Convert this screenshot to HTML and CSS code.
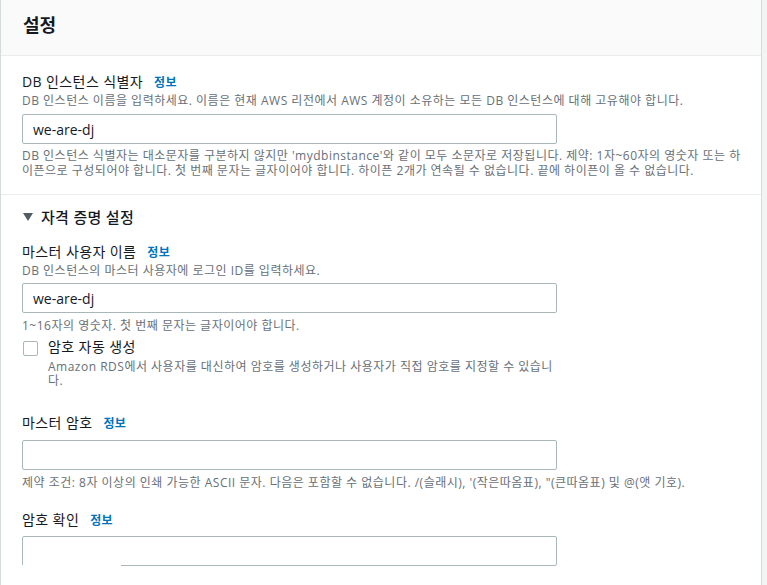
FILE: index.html
```html
<!DOCTYPE html>
<html lang="ko">
<head>
    <meta charset="UTF-8">
    <meta name="viewport" content="width=device-width, initial-scale=1.0">
    <title>설정</title>
    <link rel="stylesheet" href="styles.css">
</head>
<body>
    <div class="panel">
        <div class="panel-header">
            <h2>설정</h2>
        </div>

        <!-- DB instance identifier -->
        <div class="section">
            <div class="field">
                <div class="label">DB 인스턴스 식별자 <a class="info">정보</a></div>
                <div class="desc">DB 인스턴스 이름을 입력하세요. 이름은 현재 AWS 리전에서 AWS 계정이 소유하는 모든 DB 인스턴스에 대해 고유해야 합니다.</div>
                <input class="text-input" type="text" value="we-are-dj">
                <div class="hint hint-wide">DB 인스턴스 식별자는 대소문자를 구분하지 않지만 'mydbinstance'와 같이 모두 소문자로 저장됩니다. 제약: 1자~60자의 영숫자 또는 하이픈으로 구성되어야 합니다. 첫 번째 문자는 글자이어야 합니다. 하이픈 2개가 연속될 수 없습니다. 끝에 하이픈이 올 수 없습니다.</div>
            </div>
        </div>

        <!-- Credentials -->
        <div class="section section-open">
            <div class="expander">
                <svg class="caret" width="10" height="8" viewBox="0 0 10 8"><polygon points="0,0 10,0 5,8" fill="#545b64"/></svg>
                <span>자격 증명 설정</span>
            </div>

            <div class="field">
                <div class="label">마스터 사용자 이름 <a class="info">정보</a></div>
                <div class="desc">DB 인스턴스의 마스터 사용자에 로그인 ID를 입력하세요.</div>
                <input class="text-input" type="text" value="we-are-dj">
                <div class="hint">1~16자의 영숫자. 첫 번째 문자는 글자이어야 합니다.</div>
            </div>

            <label class="check-row">
                <span class="checkbox"></span>
                <span class="check-text">
                    <span class="check-label">암호 자동 생성</span>
                    <span class="check-desc">Amazon RDS에서 사용자를 대신하여 암호를 생성하거나 사용자가 직접 암호를 지정할 수 있습니다.</span>
                </span>
            </label>

            <div class="field field-pw">
                <div class="label">마스터 암호 <a class="info">정보</a></div>
                <input class="text-input" type="password">
                <div class="hint">제약 조건: 8자 이상의 인쇄 가능한 ASCII 문자. 다음은 포함할 수 없습니다. /(슬래시), '(작은따옴표), "(큰따옴표) 및 @(앳 기호).</div>
            </div>

            <div class="field field-pw field-confirm">
                <div class="label">암호 확인 <a class="info">정보</a></div>
                <div class="input-wrap">
                    <input class="text-input" type="password">
                    <span class="mask"></span>
                </div>
            </div>
        </div>
    </div>
</body>
</html>
```

FILE: styles.css
```css
body {
    margin: 0;
    background: #f2f3f3;
    font-family: "Open Sans", "Noto Sans CJK KR", sans-serif;
    color: #16191f;
    overflow: hidden;
}

.panel {
    width: 762px;
    min-height: 700px;
    box-sizing: border-box;
    background: #fff;
    border-left: 1px solid #d5dbdb;
    border-right: 1px solid #d5dbdb;
}

.panel-header {
    background: #fafafa;
    border-bottom: 1px solid #eaeded;
    padding: 14px 22px 19px;
}

.panel-header h2 {
    margin: 0;
    font-size: 18px;
    line-height: 22px;
    font-weight: bold;
}

.section {
    padding: 16px 22px 16px 21px;
    border-bottom: 1px solid #eaeded;
}

.section-open {
    padding-top: 12px;
    border-bottom: none;
}

.label {
    font-size: 14px;
    line-height: 20px;
    letter-spacing: 0.4px;
}

.info {
    margin-left: 7px;
    font-size: 12px;
    font-weight: bold;
    letter-spacing: 0.3px;
    color: #0073bb;
}

.desc {
    font-size: 12px;
    line-height: 16px;
    letter-spacing: 0.5px;
    color: #687078;
    margin-top: 0;
}

.text-input {
    display: block;
    width: 535px;
    height: 30px;
    box-sizing: border-box;
    margin-top: 5px;
    padding: 0 10px;
    border: 1px solid #aab7b8;
    border-radius: 2px;
    font-family: inherit;
    font-size: 14px;
    color: #16191f;
    outline: none;
}

.section:first-of-type .text-input {
    margin-top: 4px;
}

.hint {
    font-size: 12px;
    line-height: 15px;
    letter-spacing: 0.5px;
    color: #687078;
    margin-top: 5px;
    max-width: 718px;
}

.hint-wide {
    max-width: none;
    margin-top: 4px;
    margin-right: -8px;
}

.expander {
    display: flex;
    align-items: center;
    gap: 8px;
    font-size: 15px;
    line-height: 20px;
    font-weight: 500;
    letter-spacing: 0.3px;
    color: #16191f;
    padding-left: 1px;
}

.section-open .field {
    margin-top: 15px;
}

.section-open .desc + .text-input {
    margin-top: 4px;
}

.check-row {
    display: flex;
    gap: 10px;
    margin-top: 4px;
}

.checkbox {
    flex: none;
    width: 13px;
    height: 13px;
    margin-top: 4px;
    margin-left: 1px;
    border: 1px solid #aab7b8;
    border-radius: 2px;
    background: #fff;
}

.check-text {
    display: flex;
    flex-direction: column;
    max-width: 512px;
}

.check-label {
    font-size: 14px;
    line-height: 20px;
    letter-spacing: 0.4px;
}

.check-desc {
    font-size: 12px;
    line-height: 14px;
    letter-spacing: 0.5px;
    color: #687078;
    margin-top: 3px;
}

.section-open .field-pw {
    margin-top: 25px;
}

.field-pw .text-input {
    margin-top: 6px;
}

.section-open .field-pw + .field-pw {
    margin-top: 20px;
}

.field-confirm .text-input {
    margin-top: 5px;
}

.input-wrap {
    position: relative;
}

.mask {
    position: absolute;
    left: 1px;
    bottom: -1px;
    width: 98px;
    height: 3px;
    background: #fff;
}
```
